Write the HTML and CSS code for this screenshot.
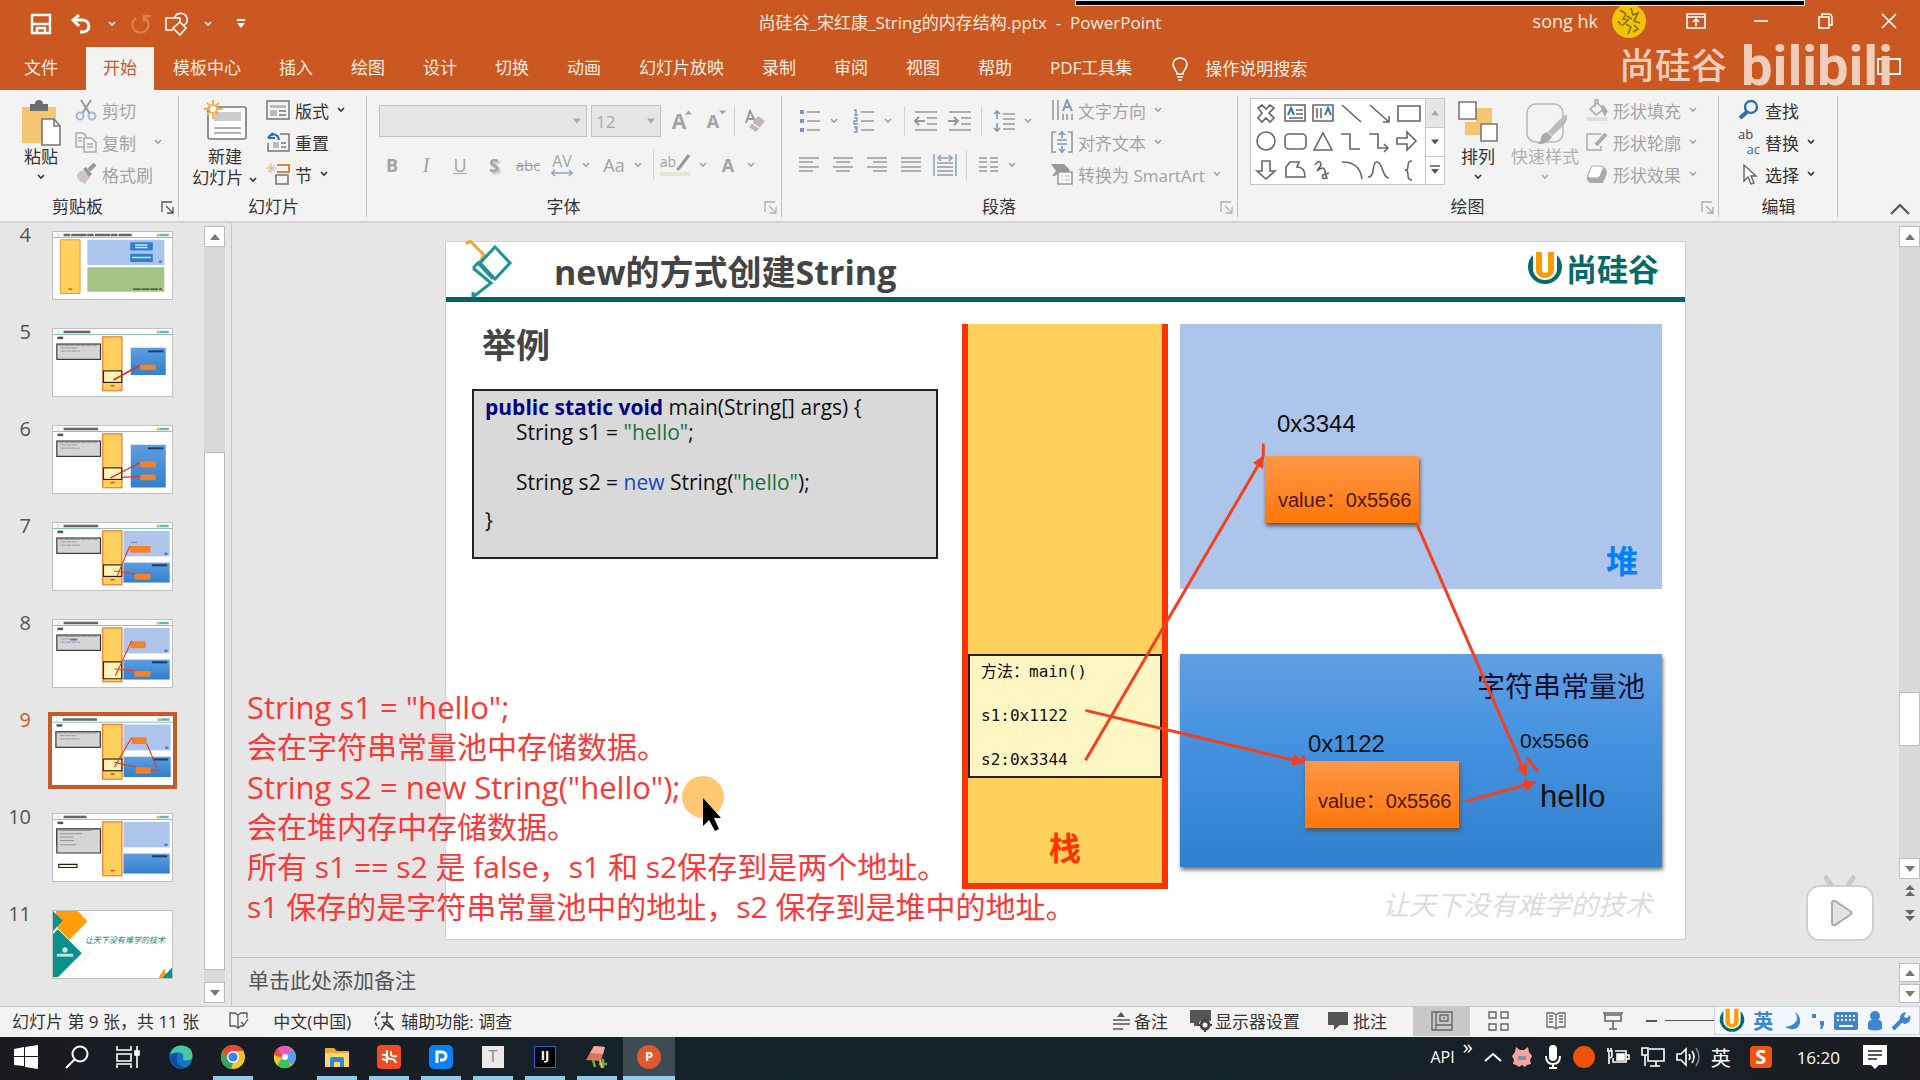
FILE: index.html
```html
<!DOCTYPE html>
<html lang="zh-CN">
<head>
    <meta charset="UTF-8">
    <meta name="viewport" content="width=device-width, initial-scale=1.0">
    <title>尚硅谷_宋红康_String的内存结构.pptx - PowerPoint</title>
    <link rel="stylesheet" href="styles.css">
</head>
<body>
    <!-- shared shapes -->
    <svg class="defs" width="0" height="0" aria-hidden="true">
        <defs>
            <symbol id="chev" viewBox="0 0 10 8"><path d="M2 2l3 3 3-3" fill="none" stroke="currentColor" stroke-width="1.600"/></symbol>
            <symbol id="tri-down" viewBox="0 0 10 10"><path d="M0 2h10l-5 6z" fill="currentColor"/></symbol>
            <symbol id="tri-up" viewBox="0 0 10 10"><path d="M0 8h10l-5-6z" fill="currentColor"/></symbol>
            <symbol id="launch" viewBox="0 0 14 14"><path d="M1 11V1h10M5 5l7 7M12 6v6H6" fill="none" stroke="currentColor" stroke-width="1.3"/></symbol>
            <symbol id="logo-u" viewBox="0 0 36 36">
                <path d="M6 4a17 17 0 1 0 24 0v14a12 11 0 0 1-24 0z" fill="#056a6a"/>
                <path d="M9 1h6v18a3 3 0 0 0 6 0V1h6v18a9 8 0 0 1-18 0z" fill="#fb9b05"/>
            </symbol>
            <linearGradient id="pool-fill" x1="0" y1="0" x2="0" y2="1">
                <stop offset="0" stop-color="#5f9de0"/><stop offset="1" stop-color="#3080cd"/>
            </linearGradient>
            <!-- parts of the small slides, in slide units -->
            <g id="t-head">
                <rect width="1240" height="697" fill="#fff"/>
                <rect y="54" width="1240" height="8" fill="#5fb3ae"/>
                <path d="M40 10l30 20-30 22" fill="none" stroke="#a5d5d2" stroke-width="8"/>
                <rect x="1080" y="18" width="34" height="28" fill="#f0b060"/>
                <rect x="1114" y="18" width="92" height="26" fill="#6cb4b8"/>
            </g>
            <g id="t-stack">
                <rect x="518" y="81" width="200" height="562" fill="#ffd15c" stroke="#f2732e" stroke-width="12"/>
                <path d="M600 590h40" stroke="#f04020" stroke-width="16"/>
            </g>
            <g id="t-code">
                <path d="M46 92h60" stroke="#555" stroke-width="26"/>
                <rect x="40" y="156" width="455" height="160" fill="#d5d5d5" stroke="#333" stroke-width="12"/>
                <path d="M60 170h400M80 196h180M80 230h200" stroke="#888" stroke-width="8" stroke-dasharray="50 8"/>
            </g>
            <g id="t-frame">
                <rect x="526" y="436" width="190" height="120" fill="#fff3b8" stroke="#222" stroke-width="12"/>
            </g>
            <g id="t-heap">
                <rect x="734" y="82" width="482" height="265" fill="#aec5eb"/>
                <path d="M1160 320h34" stroke="#3a72e0" stroke-width="22"/>
            </g>
            <g id="t-pool">
                <rect x="734" y="412" width="482" height="208" fill="url(#pool-fill)"/>
                <path d="M1030 440h160" stroke="#1b3f74" stroke-width="22"/>
            </g>
        </defs>
    </svg>

    <header class="titlebar">
        <div class="quick">
            <button aria-label="保存"><svg width="22" height="22" viewBox="0 0 22 22" fill="none" stroke="#fff" stroke-width="2.4"><path d="M2 2h18v18H2zM2 11h18M7 20v-5h8v5"/></svg></button>
            <button aria-label="撤消"><svg width="22" height="20" viewBox="0 0 22 20" fill="none" stroke="#fff" stroke-width="3"><path d="M9 1L3 6l6 6M3 6h9c9 0 9 12 1 12h-3"/></svg></button>
            <button class="narrow" aria-label="撤消列表"><svg width="10" height="8"><use href="#chev"/></svg></button>
            <button class="dim" aria-label="恢复"><svg width="22" height="20" viewBox="0 0 22 20" fill="none" stroke="#e07c4c" stroke-width="2.4"><path d="M6 4a8 8 0 1 0 9 0M14 8V2h7"/></svg></button>
            <button aria-label="形状"><svg width="26" height="24" viewBox="0 0 26 24" fill="none" stroke="#fff" stroke-width="1.6"><path d="M9 18H2V6h14v4M11 5c2-5 10-5 12 1 1 4-1 6-3 7M16 10l6 6-6 7-7-7z"/></svg></button>
            <button class="narrow" aria-label="形状列表"><svg width="10" height="8"><use href="#chev"/></svg></button>
            <button class="more" aria-label="自定义"><svg width="10" height="12" viewBox="0 0 10 12"><path d="M1 2h8" stroke="#fff" stroke-width="2"/><path d="M1 5h8l-4 5z" fill="#fff"/></svg></button>
        </div>
        <h1 class="doc-title">尚硅谷_宋红康_String的内存结构.pptx&nbsp; -&nbsp; PowerPoint</h1>
        <div class="account">
            <span>song hk</span>
            <svg class="avatar" width="34" height="34" viewBox="0 0 34 34"><circle cx="17" cy="17" r="17" fill="#f2c406"/><path d="M8 6l6 4-3 5 5 1-6 6M19 4l2 7 5-2-4 8 6 2M14 20l5 3-3 7M22 21l4 4-5 3M6 17l3 4M15 12l5 3" fill="none" stroke="#8f6a10" stroke-width="1.600"/></svg>
        </div>
        <div class="window-buttons">
            <button aria-label="功能区选项"><svg width="20" height="16" viewBox="0 0 20 16" fill="none" stroke="#fff" stroke-width="1.6"><path d="M1 1h18v14H1zM1 4h18M10 13V7M7 9l3-3 3 3"/></svg></button>
            <button aria-label="最小化"><svg width="16" height="16" viewBox="0 0 16 16" stroke="#fff" stroke-width="1.6"><path d="M1 8h14"/></svg></button>
            <button aria-label="还原"><svg width="16" height="16" viewBox="0 0 16 16" fill="none" stroke="#fff" stroke-width="1.6"><path d="M1 4h10v11H1zM4 4V1h6q4 0 4 4v7h-3"/></svg></button>
            <button aria-label="关闭"><svg width="16" height="16" viewBox="0 0 16 16" stroke="#fff" stroke-width="1.6"><path d="M1 1l14 14M15 1L1 15"/></svg></button>
        </div>
        <div class="share-bar"></div>
    </header>

    <nav class="tabs">
        <a href="#" class="file">文件</a>
        <a href="#" class="active">开始</a>
        <a href="#">模板中心</a>
        <a href="#">插入</a>
        <a href="#">绘图</a>
        <a href="#">设计</a>
        <a href="#">切换</a>
        <a href="#">动画</a>
        <a href="#">幻灯片放映</a>
        <a href="#">录制</a>
        <a href="#">审阅</a>
        <a href="#">视图</a>
        <a href="#">帮助</a>
        <a href="#">PDF工具集</a>
        <a href="#" class="tell"><svg width="18" height="24" viewBox="0 0 18 24" fill="none" stroke="#fff" stroke-width="1.6"><path d="M6 17c0-4-4-5-4-10a7 6 0 0 1 14 0c0 5-4 6-4 10zM6 20h6M7 23h4"/></svg>操作说明搜索</a>
        <button class="comment" aria-label="批注"><svg width="24" height="22" viewBox="0 0 24 22" fill="none" stroke="#fff" stroke-width="1.8"><path d="M1 1h22v15H11l-5 5v-5H1z"/></svg></button>
        <div class="stamp"><span class="stamp-name">尚硅谷</span><span class="stamp-site">bilibili</span></div>
    </nav>

    <section class="ribbon">
        <div class="group g-clip">
            <div class="group-body">
                <button class="big">
                    <svg width="42" height="46" viewBox="0 0 42 46"><path d="M2 7h34v36H2z" fill="#f6c571"/><path d="M10 4h5q0-4 4-4t4 4h5v7H10z" fill="#6d6d6d"/><path d="M22 19h12l6 7v19H22z" fill="#fff" stroke="#777" stroke-width="1.6"/><path d="M34 19v7h6" fill="none" stroke="#777" stroke-width="1.6"/></svg>
                    <span>粘贴</span><svg width="10" height="8"><use href="#chev"/></svg>
                </button>
                <div class="lines off">
                    <button><svg width="22" height="22" viewBox="0 0 22 22" fill="none" stroke="#999" stroke-width="2"><path d="M6 1l9 14M16 1L7 15"/><circle cx="5" cy="17" r="3.5" stroke="#a9b8d4"/><circle cx="17" cy="17" r="3.5" stroke="#a9b8d4"/></svg>剪切</button>
                    <button><svg width="22" height="22" viewBox="0 0 22 22" fill="none" stroke="#aaa" stroke-width="1.5"><path d="M10 16H1V2h7l3 3v2M9 7h7l5 4v10H9zM3 7h4M3 10h4M12 13h6M12 16h6"/></svg>复制<svg class="gap-chev" width="10" height="8"><use href="#chev"/></svg></button>
                    <button><svg width="22" height="22" viewBox="0 0 22 22"><path d="M2 11l5-4 8 7-5 7-4-2-4-4z" fill="#cfc5c5"/><path d="M8 6l3-2 6 7-3 3z" fill="#999"/><path d="M14 7l6-6" stroke="#999" stroke-width="4"/></svg>格式刷</button>
                </div>
            </div>
            <div class="group-label">剪贴板<button class="launcher dark" aria-label="剪贴板选项"><svg width="14" height="14"><use href="#launch"/></svg></button></div>
        </div>

        <div class="group g-slides">
            <div class="group-body">
                <button class="big">
                    <svg width="44" height="46" viewBox="0 0 44 46"><rect x="5" y="7" width="38" height="32" rx="2" fill="#fff" stroke="#777" stroke-width="1.6"/><path d="M11 12h27v9H11z" fill="#ccc"/><path d="M11 28h27M11 33h27" stroke="#999" stroke-width="1.4"/><circle cx="10" cy="9" r="4" fill="#fff" stroke="#f0b252" stroke-width="2"/><path d="M10 0v4M10 14v5M1 9h4M15 9h5M4 3l3 3M16 3l-3 3M4 15l3-3M16 15l-3-3" stroke="#f0b252" stroke-width="2"/></svg>
                    <span>新建</span><span>幻灯片 <svg width="10" height="8"><use href="#chev"/></svg></span>
                </button>
                <div class="lines">
                    <button><svg width="24" height="22" viewBox="0 0 24 22" fill="none" stroke="#777" stroke-width="1.5"><path d="M1 2h22v18H1z"/><path d="M4 6h16v3H4zM4 11h7v6H4z" fill="#bbb" stroke="none"/><path d="M13 12h7M13 16h7"/></svg>版式<svg width="10" height="8"><use href="#chev"/></svg></button>
                    <button><svg width="24" height="22" viewBox="0 0 24 22" fill="none" stroke="#777" stroke-width="1.5"><path d="M14 3h9v17H2v-8"/><path d="M7 11h6v6H7z" fill="#bbb" stroke="none"/><path d="M15 12h5M15 16h5"/><path d="M2 7l5-5M2 7h7M2 7c4-6 10-4 11 2" stroke="#2f6eb5" stroke-width="2.2"/></svg>重置</button>
                    <button><svg width="24" height="22" viewBox="0 0 24 22" fill="none"><path d="M11 2h12v7H11" stroke="#d8873a" stroke-width="2"/><path d="M10 12h12v9H10z" stroke="#777" stroke-width="1.6"/><path d="M5 0v10M0 5h10M2 2l7 7M9 2L2 9" stroke="#f0b252"/></svg>节<svg width="10" height="8"><use href="#chev"/></svg></button>
                </div>
            </div>
            <div class="group-label">幻灯片</div>
        </div>

        <div class="group g-font off">
            <div class="tools">
                <div class="tool-row first">
                    <label class="combo font-name"><select aria-label="字体" disabled><option></option></select><svg width="8" height="8"><use href="#tri-down"/></svg></label>
                    <label class="combo font-size"><select aria-label="字号" disabled><option>12</option></select><svg width="8" height="8"><use href="#tri-down"/></svg></label>
                    <button class="tool"><b class="letter-l">A</b><svg class="sup" width="7" height="7"><use href="#tri-up"/></svg></button>
                    <button class="tool"><b>A</b><svg class="sup" width="7" height="7"><use href="#tri-down"/></svg></button>
                    <i class="rule"></i>
                    <button class="tool" aria-label="清除格式"><svg width="22" height="24" viewBox="0 0 22 24"><path d="M1 14L5 2l5 10M2 10h6" fill="none" stroke="#999" stroke-width="2"/><path d="M13 7l7 5-9 11-7-5z" fill="#c5b5b6"/><path d="M7 14l7 5" stroke="#f3f3f3" stroke-width="1.5"/></svg></button>
                </div>
                <div class="tool-row">
                    <button class="tool"><b>B</b></button>
                    <button class="tool"><i class="serif">I</i></button>
                    <button class="tool"><u>U</u></button>
                    <button class="tool"><b class="shadow">S</b></button>
                    <button class="tool"><s>abc</s></button>
                    <button class="tool wide"><span class="spacing">AV<svg width="22" height="8" viewBox="0 0 22 8" fill="none" stroke="#8fa6c6" stroke-width="1.6"><path d="M1 4h20M4 1L1 4l3 3M18 1l3 3-3 3"/></svg></span><svg width="10" height="8"><use href="#chev"/></svg></button>
                    <button class="tool wide"><span>Aa</span><svg width="10" height="8"><use href="#chev"/></svg></button>
                    <i class="rule"></i>
                    <button class="tool wide"><span class="marker">ab<svg width="14" height="18" viewBox="0 0 14 18"><path d="M13 1L4 13l-3 3" stroke="#999" stroke-width="3"/></svg></span><svg width="10" height="8"><use href="#chev"/></svg></button>
                    <button class="tool wide color"><b>A</b><svg width="10" height="8"><use href="#chev"/></svg></button>
                </div>
            </div>
            <div class="group-label">字体<button class="launcher" aria-label="字体选项"><svg width="14" height="14"><use href="#launch"/></svg></button></div>
        </div>

        <div class="group g-para off">
            <div class="group-body">
                <div class="tools">
                    <div class="tool-row">
                        <button class="tool wide" aria-label="项目符号"><svg width="22" height="24" viewBox="0 0 22 24"><path d="M8 3h13M8 12h13M8 21h13" stroke="#999" stroke-width="1.6"/><path d="M1 3h4M1 12h4M1 21h4" stroke="#7d93bb" stroke-width="4"/></svg><svg width="10" height="8"><use href="#chev"/></svg></button>
                        <button class="tool wide" aria-label="编号"><svg width="22" height="24" viewBox="0 0 22 24"><path d="M8 3h13M8 12h13M8 21h13" stroke="#999" stroke-width="1.6"/><path d="M1 1h2v5M1 6h4M1 9h3v3H1v3h4M1 18h3v5H1M2 20h2" fill="none" stroke="#7d93bb" stroke-width="1.3"/></svg><svg width="10" height="8"><use href="#chev"/></svg></button>
                        <i class="rule"></i>
                        <button class="tool" aria-label="减少缩进"><svg width="24" height="20" viewBox="0 0 24 20" fill="none" stroke="#999" stroke-width="1.6"><path d="M1 1h22M13 7h10M13 13h10M1 19h22"/><path d="M1 10h10M5 6l-4 4 4 4" stroke-width="2"/></svg></button>
                        <button class="tool" aria-label="增加缩进"><svg width="24" height="20" viewBox="0 0 24 20" fill="none" stroke="#999" stroke-width="1.6"><path d="M1 1h22M13 7h10M13 13h10M1 19h22"/><path d="M0 10h10M6 6l4 4-4 4" stroke-width="2"/></svg></button>
                        <i class="rule"></i>
                        <button class="tool wide" aria-label="行距"><svg width="22" height="22" viewBox="0 0 22 22" fill="none" stroke="#999" stroke-width="1.6"><path d="M10 4h12M10 9h12M10 14h12M10 19h12"/><path d="M4 1v8M1 4l3-3 3 3M4 13v8M1 18l3 3 3-3" stroke="#7f98b8"/></svg><svg width="10" height="8"><use href="#chev"/></svg></button>
                    </div>
                    <div class="tool-row">
                        <button class="tool" aria-label="左对齐"><svg width="20" height="16" viewBox="0 0 20 16" stroke="#999" stroke-width="1.6"><path d="M0 1h20M0 5h14M0 10h20M0 14h14"/></svg></button>
                        <button class="tool" aria-label="居中"><svg width="20" height="16" viewBox="0 0 20 16" stroke="#999" stroke-width="1.6"><path d="M0 1h20M3 5h14M0 10h20M3 14h14"/></svg></button>
                        <button class="tool" aria-label="右对齐"><svg width="20" height="16" viewBox="0 0 20 16" stroke="#999" stroke-width="1.6"><path d="M0 1h20M6 5h14M0 10h20M6 14h14"/></svg></button>
                        <button class="tool" aria-label="两端对齐"><svg width="20" height="16" viewBox="0 0 20 16" stroke="#999" stroke-width="1.6"><path d="M0 1h20M0 5h20M0 10h20M0 14h20"/></svg></button>
                        <button class="tool" aria-label="分散对齐"><svg width="24" height="22" viewBox="0 0 24 22" fill="none" stroke="#999" stroke-width="1.6"><path d="M4 9h16M4 13h16M4 17h16M4 21h16"/><path d="M1 0v22M23 0v22M5 4h14M8 1L5 4l3 3M16 1l3 3-3 3" stroke="#8fa6bd"/></svg></button>
                        <i class="rule"></i>
                        <button class="tool wide" aria-label="分栏"><svg width="20" height="16" viewBox="0 0 20 16" stroke="#999" stroke-width="1.6"><path d="M0 1h8M0 5h8M0 10h8M0 14h8M11 1h8M11 5h8M11 10h8M11 14h8"/></svg><svg width="10" height="8"><use href="#chev"/></svg></button>
                    </div>
                </div>
                <div class="lines">
                    <button><svg width="22" height="22" viewBox="0 0 22 22" fill="none" stroke="#999" stroke-width="1.6"><path d="M2 1v20M7 1v20M12 15v6M16 15v6M21 15v6"/><path d="M12 12l4-11 5 11M13 8h6" stroke="#7f9cb8" stroke-width="2"/></svg>文字方向<svg width="10" height="8"><use href="#chev"/></svg></button>
                    <button><svg width="22" height="22" viewBox="0 0 22 22" fill="none" stroke="#999" stroke-width="1.6"><path d="M5 1H1v20h4M17 1h4v20h-4"/><path d="M6 9h10M6 13h10M11 0v7M8 4l3-3 3 3M11 15v7M8 18l3 3 3-3" stroke="#7f9cb8"/></svg>对齐文本<svg width="10" height="8"><use href="#chev"/></svg></button>
                    <button><svg width="22" height="22" viewBox="0 0 22 22"><path d="M0 1h13l6 6-2 2H8l-4 4H1l4-5z" fill="#999"/><path d="M7 9h14v12H7z" fill="#fff" stroke="#999" stroke-width="1.6"/><path d="M10 13h2M14 13h5M10 17h2M14 17h5" stroke="#c5a5a5"/></svg>转换为 SmartArt<svg width="10" height="8"><use href="#chev"/></svg></button>
                </div>
            </div>
            <div class="group-label">段落<button class="launcher" aria-label="段落选项"><svg width="14" height="14"><use href="#launch"/></svg></button></div>
        </div>

        <div class="group g-draw">
            <div class="group-body">
                <div class="gallery">
                    <svg width="168" height="84" viewBox="0 0 168 84" fill="none" stroke="#666" stroke-width="1.6">
                        <path d="M7 9l4-3 4 4 4-4 4 3-5 5 5 5-4 4-4-4-4 4-4-4 4-5z"/>
                        <path d="M34 6h20v16H34zM45 11h7M45 15h7M38 19h14M62 6h20v16H62zM66 9v10M70 9v10"/><path d="M37 16l3-7 3 7M74 16l3-7 3 7" stroke="#2f78ad" stroke-width="2"/>
                        <path d="M91 6l19 17M119 6l19 17M138 17v6h-6M147 7h22v15h-22z"/>
                        <circle cx="15" cy="42" r="9"/><rect x="34" y="35" width="21" height="15" rx="4"/><path d="M72 34l9 17H63zM90 35h9v15h10M118 35h9v14h10M133 45l4 4-4 4M146 39h10v-6l9 9-9 9v-6h-10z"/>
                        <path d="M11 62h8v10h5l-9 8-9-8h5zM35 68l4-5h9l-2 5q8 0 8 10H35zM64 66q5-7 6 0l-4 6q7-6 8 0t2 7q-6 2-4-3l6-2M91 63q18 0 20 17M117 78c8 0 3-15 9-15s5 16 12 16M161 62q-4 0-4 5t-3 4q3 0 3 5t4 5"/>
                    </svg>
                    <div class="gallery-nav">
                        <button class="spent" aria-label="上一行"><svg width="8" height="8"><use href="#tri-up"/></svg></button>
                        <button aria-label="下一行"><svg width="8" height="8"><use href="#tri-down"/></svg></button>
                        <button aria-label="全部形状"><svg width="10" height="12" viewBox="0 0 10 12"><path d="M0 2h10" stroke="#555" stroke-width="1.5"/><path d="M1 5h8l-4 5z" fill="#555"/></svg></button>
                    </div>
                </div>
                <button class="big arrange">
                    <svg width="40" height="46" viewBox="0 0 40 46"><path d="M18 8h16v16H18zM7 22h16v13H7z" fill="#f6c571"/><path d="M1 2h17v17H1zM23 24h16v17H23z" fill="#fff" stroke="#777" stroke-width="1.6"/></svg>
                    <span>排列</span><svg width="10" height="8"><use href="#chev"/></svg>
                </button>
                <button class="big quick-style off">
                    <svg width="44" height="46" viewBox="0 0 44 46" fill="none"><rect x="4" y="4" width="36" height="38" rx="9" fill="#f3f3f3" stroke="#bbb" stroke-width="1.6"/><path d="M44 14q1 6-3 11L29 36l-4-4 11-12z" fill="#bbb"/><path d="M24 32l5 5q-5 8-15 7 4-2 4-6t6-6z" fill="#aaa"/></svg>
                    <span>快速样式</span><svg width="10" height="8"><use href="#chev"/></svg>
                </button>
                <div class="lines off">
                    <button><svg width="22" height="22" viewBox="0 0 22 22" fill="none" stroke="#aaa" stroke-width="1.5"><path d="M4 10l7-6 7 6-8 6zM9 8V1h3v4"/><path d="M17 7l4 5-2 4-3-5z" fill="#aaa"/><path d="M1 20h20" stroke="#dfdfda" stroke-width="4"/></svg>形状填充<svg width="10" height="8"><use href="#chev"/></svg></button>
                    <button><svg width="22" height="22" viewBox="0 0 22 22" fill="none" stroke="#aaa" stroke-width="1.5"><path d="M15 3H1v16h14v-4"/><path d="M20 3L10 14" stroke-width="4"/></svg>形状轮廓<svg width="10" height="8"><use href="#chev"/></svg></button>
                    <button><svg width="22" height="22" viewBox="0 0 22 22"><path d="M6 3h10q5 2 5 7l-4 10H4q-4-3-3-6z" fill="#aaa"/><path d="M7 3h9q2 0 1 3l-3 7q-1 2-3 2H4q-3 0-2-3l3-7q0-2 2-2z" fill="#fff" stroke="#aaa"/></svg>形状效果<svg width="10" height="8"><use href="#chev"/></svg></button>
                </div>
            </div>
            <div class="group-label">绘图<button class="launcher" aria-label="绘图选项"><svg width="14" height="14"><use href="#launch"/></svg></button></div>
        </div>

        <div class="group g-edit">
            <div class="group-body">
                <div class="lines">
                    <button><svg width="22" height="22" viewBox="0 0 22 22" fill="none" stroke="#2f6eb5"><circle cx="13" cy="8" r="6" stroke-width="2.4"/><path d="M9 13l-7 6" stroke-width="4"/></svg>查找</button>
                    <button><span class="swap"><span>ab</span><span>ac</span></span>替换<svg class="gap-chev" width="10" height="8"><use href="#chev"/></svg></button>
                    <button><svg width="22" height="22" viewBox="0 0 22 22"><path d="M6 2v16l4-4 3 7 3-1-3-7h5z" fill="#fff" stroke="#666" stroke-width="1.4"/></svg>选择<svg width="10" height="8"><use href="#chev"/></svg></button>
                </div>
            </div>
            <div class="group-label">编辑</div>
        </div>
        <button class="collapse" aria-label="折叠功能区"><svg width="20" height="12" viewBox="0 0 20 12" fill="none" stroke="#555" stroke-width="2.2"><path d="M1 11l9-9 9 9"/></svg></button>
    </section>

    <main class="workspace">
        <aside class="pane">
            <ol class="thumbs">
                <li><span>4</span><svg class="thumb" viewBox="0 0 1240 697">
                    <use href="#t-head"/><path d="M110 30h710" stroke="#666" stroke-width="26" stroke-dasharray="70 10 160 6"/>
                    <path d="M76 80h206v560H76z" fill="#ffd15c" stroke="#f2932e" stroke-width="10"/><path d="M160 595h40" stroke="#f04020" stroke-width="14"/>
                    <path d="M358 80h802v262H358z" fill="#aec5eb"/><path d="M358 366h802v256H358z" fill="#a4c585"/>
                    <path d="M805 105h235v86H805zM805 226h235v86H805z" fill="#2f7fd0"/><path d="M855 135h130M855 162h130M825 265h195" stroke="#cfe3f7" stroke-width="16"/>
                    <path d="M1105 308h30" stroke="#3a72e0" stroke-width="20"/><path d="M835 594h300" stroke="#4d6b35" stroke-width="18" stroke-dasharray="80 10"/>
                </svg></li>
                <li><span>5</span><svg class="thumb" viewBox="0 0 1240 697">
                    <use href="#t-head"/><path d="M110 30h280" stroke="#666" stroke-width="26"/><use href="#t-code"/><use href="#t-stack"/><use href="#t-frame"/>
                    <path d="M810 195h365v285H810z" fill="url(#pool-fill)"/><path d="M990 232h160" stroke="#1b3f74" stroke-width="20"/><path d="M910 370h160v58H910z" fill="#f58228"/><path d="M630 530L900 380" stroke="#d93020" stroke-width="18"/>
                </svg></li>
                <li><span>6</span><svg class="thumb" viewBox="0 0 1240 697">
                    <use href="#t-head"/><path d="M110 30h360" stroke="#666" stroke-width="26"/><use href="#t-code"/><use href="#t-stack"/><use href="#t-frame"/>
                    <path d="M810 195h365v445H810z" fill="url(#pool-fill)"/><path d="M990 232h160" stroke="#1b3f74" stroke-width="20"/><path d="M910 370h160v60H910zM910 505h160v60H910z" fill="#f58228"/><path d="M600 540L900 385M720 535L900 525" stroke="#d93020" stroke-width="14"/>
                </svg></li>
                <li><span>7</span><svg class="thumb" viewBox="0 0 1240 697">
                    <use href="#t-head"/><path d="M110 30h360" stroke="#666" stroke-width="26"/><use href="#t-code"/><use href="#t-stack"/><use href="#t-frame"/><use href="#t-heap"/><use href="#t-pool"/>
                    <path d="M800 240h215v70H800zM850 530h165v60H850z" fill="#f58228"/><path d="M670 550L800 240M640 500L860 530" fill="none" stroke="#e83a24" stroke-width="12"/><path d="M810 200h70" stroke="#536a92" stroke-width="8"/>
                </svg></li>
                <li><span>8</span><svg class="thumb" viewBox="0 0 1240 697">
                    <use href="#t-head"/><path d="M110 30h360" stroke="#666" stroke-width="26"/><use href="#t-code"/><use href="#t-stack"/><path d="M526 436h190v176H526z" fill="#fff3b8" stroke="#222" stroke-width="12"/><use href="#t-heap"/><use href="#t-pool"/>
                    <path d="M810 220h155v75H810zM850 530h165v60H850z" fill="#f58228"/><path d="M650 580L820 215M640 510L860 530" fill="none" stroke="#e83a24" stroke-width="12"/><path d="M180 205h70" stroke="#5a6adf" stroke-width="16"/>
                </svg></li>
                <li class="selected"><span>9</span><svg class="thumb" viewBox="0 0 1240 697">
                    <use href="#t-head"/><path d="M110 30h350" stroke="#666" stroke-width="26"/><use href="#t-code"/><use href="#t-stack"/><use href="#t-frame"/><use href="#t-heap"/><use href="#t-pool"/>
                    <path d="M818 213h150v68H818zM858 519h152v66H858z" fill="#f58228"/><path d="M640 517L818 213M640 470L858 519M970 280l110 252M1020 560l70-18" fill="none" stroke="#e83a24" stroke-width="12"/>
                </svg></li>
                <li><span>10</span><svg class="thumb" viewBox="0 0 1240 697">
                    <use href="#t-head"/><path d="M110 30h240" stroke="#666" stroke-width="26"/><use href="#t-code"/><path d="M40 156h455v250H40z" fill="#d5d5d5" stroke="#333" stroke-width="12"/><path d="M60 170h350M70 205h230M70 240h140M70 275h150M70 320h170" stroke="#888" stroke-width="9"/><use href="#t-stack"/><use href="#t-heap"/><use href="#t-pool"/>
                    <path d="M60 525h190v32H60z" fill="#fff3b8" stroke="#222" stroke-width="12"/>
                </svg></li>
                <li><span>11</span><svg class="thumb" viewBox="0 0 1240 697">
                    <rect width="1240" height="697" fill="#fff"/><path d="M30 0h230l100 110-190 190L50 180z" fill="#ff9d0a"/><path d="M0 0l100 100L0 210z" fill="#0d8f8c"/><path d="M50 190l250 250L50 690H0V240z" fill="#0d8f8c"/><path d="M320 0l90 100M200 310l180 130-240 257" fill="none" stroke="#dfe9ef" stroke-width="8"/>
                    <circle cx="125" cy="405" r="28" fill="#bfe3e0"/><path d="M40 460h170" stroke="#bfe3e0" stroke-width="30"/>
                    <text x="330" y="330" class="thumb-motto">让天下没有难学的技术</text><path d="M1100 697l60-100 30 100z" fill="#ff9d0a"/><path d="M1140 697l100-110v110z" fill="#0d8f8c"/>
                </svg></li>
            </ol>
            <div class="scroll pane-scroll">
                <button aria-label="向上"><svg width="10" height="10"><use href="#tri-up"/></svg></button>
                <div class="track"><div class="thumb-bar"></div></div>
                <button aria-label="向下"><svg width="10" height="10"><use href="#tri-down"/></svg></button>
            </div>
        </aside>

        <section class="editor">
            <div class="stage-row">
                <div class="stage">
                    <article class="slide">
                        <header class="slide-head">
                            <svg width="50" height="58" viewBox="0 0 50 58" fill="none" stroke-width="3"><path d="M2 4l4-3 14 14-5 8" stroke="#eea63a"/><path d="M31 7l15 16-15 16-15-16z" stroke="#1d9592"/><path d="M9 28l18 15L9 57M9 28l5-5 15 16M9 52v5" stroke="#1d9592"/></svg>
                            <h2>new的方式创建String</h2>
                            <div class="brand"><svg width="36" height="36"><use href="#logo-u"/></svg><span>尚硅谷</span></div>
                        </header>
                        <div class="slide-body">
                            <div class="example">
                                <h3>举例</h3>
                                <div class="code">
                                    <p><b>public static void</b> main(String[] args) {</p>
                                    <p class="in">String s1 = <span class="str">"hello"</span>;</p>
                                    <p>&nbsp;</p>
                                    <p class="in">String s2 = <span class="new">new</span> String(<span class="str">"hello"</span>);</p>
                                    <p class="end">}</p>
                                </div>
                            </div>
                            <div class="stack">
                                <div class="frame"><p>方法：main()</p><p>s1:0x1122</p><p>s2:0x3344</p></div>
                                <strong>栈</strong>
                            </div>
                            <div class="memory">
                                <div class="heap">
                                    <span class="addr at-3344">0x3344</span>
                                    <div class="object obj-heap">value：0x5566</div>
                                    <strong>堆</strong>
                                </div>
                                <div class="pool">
                                    <span class="pool-name">字符串常量池</span>
                                    <span class="addr at-1122">0x1122</span>
                                    <span class="addr small at-5566">0x5566</span>
                                    <div class="object obj-pool">value：0x5566</div>
                                    <span class="literal">hello</span>
                                </div>
                                <p class="motto">让天下没有难学的技术</p>
                            </div>
                        </div>
                        <svg class="arrows" viewBox="0 0 1240 696" fill="none" stroke="#f4401f" stroke-width="3">
                            <defs><marker id="tip" viewBox="0 0 10 10" refX="9" refY="5" markerWidth="4" markerHeight="4" orient="auto"><path d="M0 0l10 5-10 5z" fill="#f4401f" stroke="none"/></marker></defs>
                            <path d="M640 518L818 214" marker-end="url(#tip)"/><path d="M818 201v13"/>
                            <path d="M640 468L858 520" marker-end="url(#tip)"/><path d="M858 513v8"/>
                            <path d="M971 280L1081 533" marker-end="url(#tip)"/><path d="M1081 515l12 14"/>
                            <path d="M1021 559L1090 540" marker-end="url(#tip)"/>
                        </svg>
                    </article>
                </div>
                <div class="scroll main-scroll">
                    <button aria-label="向上"><svg width="10" height="10"><use href="#tri-up"/></svg></button>
                    <div class="track"><div class="thumb-bar"></div></div>
                    <button aria-label="向下"><svg width="10" height="10"><use href="#tri-down"/></svg></button>
                    <button class="page" aria-label="上一张"><svg width="10" height="12" viewBox="0 0 10 12"><path d="M0 5l5-5 5 5zM0 11l5-5 5 5z" fill="#666"/></svg></button>
                    <button class="page" aria-label="下一张"><svg width="10" height="12" viewBox="0 0 10 12"><path d="M0 1h10L5 6zM0 7h10l-5 5z" fill="#666"/></svg></button>
                </div>
            </div>
            <div class="notes">
                <p>单击此处添加备注</p>
                <div class="scroll notes-scroll">
                    <button aria-label="向上"><svg width="10" height="10"><use href="#tri-up"/></svg></button>
                    <button aria-label="向下"><svg width="10" height="10"><use href="#tri-down"/></svg></button>
                </div>
            </div>

            <svg class="pointer" width="46" height="62" viewBox="0 0 46 62"><circle cx="22" cy="22" r="21" fill="#ffc873"/><path d="M22 23v28l6-6 6 11 4-2-5-11h7z" fill="#000"/></svg>
            <div class="remark">
                <p class="latin">String s1 = "hello";</p>
                <p>会在字符串常量池中存储数据。</p>
                <p class="latin">String s2 = new String("hello");</p>
                <p>会在堆内存中存储数据。</p>
                <p>所有 s1 == s2 是 false，s1 和 s2保存到是两个地址。</p>
                <p>s1 保存的是字符串常量池中的地址，s2 保存到是堆中的地址。</p>
            </div>
            <svg class="player" width="70" height="68" viewBox="0 0 70 68"><path d="M21 3l7 10M48 3l-7 10" stroke="#c9c9c9" stroke-width="5" stroke-linecap="round"/><rect x="2" y="11" width="66" height="54" rx="13" fill="#fff" stroke="#cfcfcf" stroke-width="2"/><path d="M27 28q0-3 3-2l15 10q3 2 0 4L30 50q-3 1-3-2z" fill="#e4e4e4" stroke="#aaa" stroke-width="2"/></svg>
        </section>
    </main>

    <footer class="status">
        <span class="page-count">幻灯片 第 9 张，共 11 张</span>
        <svg class="spell" width="20" height="20" viewBox="0 0 20 20" fill="none" stroke="#555" stroke-width="1.3"><path d="M9 17l-3-2H1V2h5l3 2zM9 4l3-2h6v5M9 17l3-2h3"/><path d="M12 11l3 3 4-6"/></svg>
        <span class="lang">中文(中国)</span>
        <span class="access"><svg width="24" height="22" viewBox="0 0 24 22" fill="none" stroke="#444" stroke-width="1.6"><path d="M7 2Q-2 9 6 19" stroke-dasharray="4 2"/><path d="M8 7h12M14 2v9M14 11l-6 9M14 11l7 9M10 12l11 8"/></svg>辅助功能: 调查</span>
        <div class="status-right">
            <button class="s-notes"><svg width="17" height="18" viewBox="0 0 17 18" stroke="#555" stroke-width="1.6"><path d="M0 8h17M0 12h17M0 17h10"/><path d="M8 0l4 5H4z" fill="#555" stroke="none"/></svg>备注</button>
            <button class="s-display"><svg width="23" height="22" viewBox="0 0 23 22"><path d="M0 0h21v11H10l-2 5H4v-3H0z" fill="#555"/><circle cx="15" cy="15" r="4" fill="#fff" stroke="#444" stroke-width="3"/><path d="M15 8v3M15 19v3M8 15h3M19 15h3" stroke="#444" stroke-width="2"/></svg>显示器设置</button>
            <button class="s-comment"><svg width="22" height="20" viewBox="0 0 22 20"><path d="M1 1h20v13H13l-6 5v-5H1z" fill="#555"/></svg>批注</button>
            <button class="view on" aria-label="普通视图"><svg width="22" height="20" viewBox="0 0 22 20" fill="none" stroke="#666" stroke-width="1.4"><path d="M1 1h20v18H1zM5 1v18M5 14h16M9 4h8v6H9zM12 7h2"/></svg></button>
            <button class="view" aria-label="浏览视图"><svg width="22" height="20" viewBox="0 0 22 20" fill="none" stroke="#666" stroke-width="1.4"><path d="M1 1h7v6H1zM13 1h7v6h-7zM1 13h7v6H1zM13 13h7v6h-7z"/></svg></button>
            <button class="view" aria-label="阅读视图"><svg width="20" height="20" viewBox="0 0 20 20" fill="none" stroke="#666" stroke-width="1.3"><path d="M10 18l-3-2H1V2h6l3 2 3-2h6v14h-6zM10 4v14M3 5h4M3 8h4M3 11h4M13 5h4M13 8h4M13 11h4"/></svg></button>
            <button class="view" aria-label="放映"><svg width="20" height="20" viewBox="0 0 20 20" fill="none" stroke="#666" stroke-width="1.6"><path d="M0 2h20M2 2v8h16V2M10 10v8M6 18h8M3 4h14"/></svg></button>
            <i class="zoom-out"></i><i class="zoom-line"></i>
            <div class="ime">
                <svg width="26" height="26"><use href="#logo-u"/></svg>
                <b>英</b>
                <svg width="20" height="20" viewBox="0 0 20 20"><path d="M13 1q7 12-10 15 12 6 15-4 1-7-5-11z" fill="#3f84cf"/></svg>
                <svg width="16" height="20" viewBox="0 0 16 20"><path d="M2 3h4v4H2zM10 10h4v4l-2 4h-2l1-4h-1z" fill="#3f84cf"/></svg>
                <svg width="24" height="18" viewBox="0 0 24 18"><rect width="24" height="18" rx="2" fill="#3f84cf"/><path d="M3 4h18M3 8h18" stroke="#fff" stroke-width="2" stroke-dasharray="2 2"/><path d="M5 14h14" stroke="#fff" stroke-width="2"/></svg>
                <svg width="16" height="20" viewBox="0 0 16 20"><circle cx="8" cy="5" r="5" fill="#3f84cf"/><path d="M1 13q0-4 4-4h6q4 0 4 4v5q-7 3-14 0z" fill="#3f84cf"/></svg>
                <svg width="20" height="20" viewBox="0 0 20 20"><path d="M2 18l9-9" stroke="#3f84cf" stroke-width="4"/><path d="M9 9q-1-7 6-8l-2 5 3 1 3-3q2 8-6 9z" fill="#3f84cf"/></svg>
            </div>
        </div>
    </footer>

    <nav class="taskbar">
        <div class="apps">
            <button class="sys" aria-label="开始"><svg width="24" height="24" viewBox="0 0 24 24" fill="#fff"><path d="M0 4l10-2v9H0zM11 2l13-2v11H11zM0 12h10v9L0 20zM11 12h13v12l-13-2z"/></svg></button>
            <button class="sys" aria-label="搜索"><svg width="24" height="24" viewBox="0 0 24 24" fill="none" stroke="#fff" stroke-width="2"><circle cx="15" cy="9" r="7.5"/><path d="M10 14l-9 9"/></svg></button>
            <button class="sys task-view" aria-label="任务视图"><svg width="24" height="22" viewBox="0 0 24 22" fill="none" stroke="#fff" stroke-width="1.6"><path d="M1 0v4h14V0M1 8h14v7H1zM1 22v-4h14v4M21 0v22"/><path d="M19 5h4v4h-4z" fill="#fff"/></svg></button>
            <button aria-label="Edge"><svg width="24" height="24" viewBox="0 0 24 24"><circle cx="12" cy="12" r="11.5" fill="#1673cc"/><path d="M1 9Q4 0 13 .500q10 1 10.500 10 0 5-6 5-5 0-3-4-1-5-7-4-4 0-6.500 1.500z" fill="#45c8a0"/><path d="M8 12q-2 8 8 10-12 4-15-9 3-6 8-5-1 2-1 4z" fill="#0d4f9d"/></svg></button>
            <button class="run" aria-label="Chrome"><svg width="24" height="24" viewBox="0 0 24 24"><circle cx="12" cy="12" r="12" fill="#f3c22c"/><path d="M1.600 6a12 12 0 0 1 20.800 0H12l-5 9z" fill="#e1493a"/><path d="M1.600 6L7 15l5 3-2 6A12 12 0 0 1 1.600 6z" fill="#39a657"/><circle cx="12" cy="12" r="6" fill="#fff"/><circle cx="12" cy="12" r="4.600" fill="#3f7fe8"/></svg></button>
            <button aria-label="浏览器"><svg width="24" height="24" viewBox="0 0 24 24"><circle cx="12" cy="12" r="11" fill="#f59b30"/><path d="M12 12Q4 8 5 3q8-5 14 1 0 6-7 8z" fill="#e85ac0"/><path d="M12 12Q18 4 20 5q5 7 0 14-6-1-8-7z" fill="#53a2ef"/><path d="M12 12q6 8 5 10-7 3-12-1-1-6 7-9z" fill="#35c65d"/><path d="M12 12Q2 12 1 9 3 4 5 3q2 6 7 9z" fill="#ee4a4c"/><path d="M1 10q4 4 11 2-8 4-7 9-5-4-4-11z" fill="#f6c22f"/><circle cx="12" cy="12" r="3" fill="#fff"/></svg></button>
            <button class="run" aria-label="资源管理器"><svg width="26" height="24" viewBox="0 0 26 24"><path d="M1 3h9l3 3h12v16H1z" fill="#eaa93a"/><path d="M1 8h24v14H1z" fill="#ffd770"/><path d="M6 22v-8q0-2 2-2h10q2 0 2 2v8h-4v-5h-6v5z" fill="#3089d8"/></svg></button>
            <button class="run" aria-label="XMind"><svg width="24" height="24" viewBox="0 0 24 24"><rect width="24" height="24" rx="4" fill="#f04b23"/><path d="M5 10q5-1 5 3v5M10 5v5q0 4 4 4t5 4M14 6v4q2 2 6 1M5 14l4 1" fill="none" stroke="#fff" stroke-width="2"/></svg></button>
            <button class="run" aria-label="P"><svg width="24" height="24" viewBox="0 0 24 24"><rect width="24" height="24" rx="5" fill="#0a82f5"/><path d="M8 18V7h5a4 4 0 0 1 0 8h-2" fill="none" stroke="#fff" stroke-width="3"/></svg></button>
            <button class="run" aria-label="Typora"><span class="tile tile-t">T</span></button>
            <button class="run" aria-label="IDEA"><span class="tile tile-ij">IJ</span></button>
            <button class="run" aria-label="绘图工具"><svg width="24" height="24" viewBox="0 0 24 24"><path d="M9 1l11 1-4 14-15-1z" fill="#d9745d"/><path d="M9 1l11 1-2 7-13-1z" fill="#f0a996"/><path d="M8 15l2 7M14 19h8M18 14v9" stroke="#6fb04a" stroke-width="2.500"/><path d="M15 15l2 8" stroke="#eebd3c" stroke-width="2"/></svg></button>
            <button class="run current" aria-label="PowerPoint"><span class="ppt">P</span></button>
        </div>
        <div class="tray">
            <span class="api">API</span><sup>»</sup>
            <svg class="t-up" width="18" height="10" viewBox="0 0 18 10" fill="none" stroke="#fff" stroke-width="2"><path d="M1 9l8-7 8 7"/></svg>
            <svg width="22" height="22" viewBox="0 0 22 22"><path d="M5 1l4 3h4l4-3 1 5 3 4-2 4 1 4-4 1-2 2-3-2-3 2-3-2-3-1 1-4-2-4 3-4z" fill="#f4a49c"/><path d="M7 10h8v4H7z" fill="#7d8fae"/></svg>
            <svg width="18" height="24" viewBox="0 0 18 24" fill="none" stroke="#fff" stroke-width="2"><rect x="6" y="1" width="6" height="14" rx="3" fill="#fff"/><path d="M2 11q0 8 7 8t7-8M9 19v4M5 23h8"/></svg>
            <svg width="22" height="22" viewBox="0 0 22 22"><circle cx="11" cy="11" r="11" fill="#ee5208"/></svg>
            <svg width="24" height="18" viewBox="0 0 24 18" fill="none" stroke="#fff" stroke-width="1.6"><path d="M9 3h11v11H7v-4M20 7h3v4h-3M1 3h5v4q0 3-3 3V3M2 0v3M5 0v3M3 10v6"/><path d="M11 6h7v6h-7z" fill="#fff"/></svg>
            <svg width="24" height="22" viewBox="0 0 24 22" fill="none" stroke="#fff" stroke-width="1.6"><path d="M8 3h15v12H7v-5M15 15v5M9 20h10M1 2h6v7H1zM4 9v11"/></svg>
            <svg width="24" height="20" viewBox="0 0 24 20" fill="none" stroke="#fff" stroke-width="1.6"><path d="M1 7h4l5-5v16l-5-5H1zM13 7q2 3 0 6M16 4q4 6 0 12"/><path d="M20 1q6 9 0 18" stroke="#77848a"/></svg>
            <span class="lang-key">英</span>
            <span class="sogou">S</span>
            <time>16:20</time>
            <svg width="24" height="24" viewBox="0 0 24 24"><path d="M0 0h24v20h-8l-4 4-4-4H0z" fill="#fff"/><path d="M5 6h14M5 10h14M5 14h9" stroke="#222" stroke-width="1.6"/></svg>
        </div>
    </nav>
</body>
</html>
```
FILE: styles.css
```css
* {
    box-sizing: border-box;
}
body {
    margin: 0;
    height: 100vh;
    display: flex;
    flex-direction: column;
    overflow: hidden;
    font-family: "Open Sans", "Noto Sans CJK SC", sans-serif;
    font-size: 17px;
    color: #333;
    background: #e6e6e6;
}
h1, h2, h3, p, ol {
    margin: 0;
    padding: 0;
}
button {
    border: none;
    padding: 0;
    background: none;
    font: inherit;
    color: inherit;
    display: flex;
    align-items: center;
    justify-content: center;
}
svg {
    flex: none;
}
.defs {
    position: absolute;
}

/* title bar */
.titlebar {
    position: relative;
    height: 47px;
    flex: none;
    display: grid;
    grid-template-columns: 1fr auto 1fr;
    background: #ca5820;
    color: #fbe9df;
}
.quick {
    display: flex;
    align-items: center;
    padding-left: 24px;
}
.quick button {
    width: 34px;
    margin-right: 6px;
}
.quick .narrow {
    width: 16px;
    margin-right: 4px;
}
.quick .narrow + .dim {
    margin-right: 2px;
}
.quick .more {
    margin-left: 4px;
}
.doc-title {
    font-size: 17px;
    font-weight: normal;
    line-height: 46px;
}
.account {
    display: flex;
    align-items: center;
    justify-content: flex-end;
    gap: 14px;
    margin-right: 274px;
    height: 42px;
    font-size: 18px;
}
.window-buttons {
    position: absolute;
    right: 0;
    top: 0;
    display: flex;
    height: 42px;
}
.window-buttons button {
    width: 65px;
}
.window-buttons button:last-child {
    width: 62px;
}
.share-bar {
    position: absolute;
    top: 0;
    left: 56%;
    width: 38%;
    height: 6px;
    background: #000;
    border: 1px solid #e8efea;
}

/* ribbon tabs */
.tabs {
    position: relative;
    height: 43px;
    flex: none;
    display: flex;
    padding-left: 5px;
    background: #ca5820;
}
.tabs a {
    padding: 0 19px;
    line-height: 42px;
    color: #fdeee6;
    text-decoration: none;
    white-space: nowrap;
}
.tabs .file {
    margin-right: 9px;
}
.tabs .active {
    padding: 0 17px;
    background: #f3f3f3;
    color: #c8572a;
}
.tabs .tell {
    display: flex;
    align-items: center;
    gap: 16px;
    padding-left: 20px;
}
.comment {
    margin-left: auto;
    margin-right: 19px;
}
.stamp {
    position: absolute;
    right: 27px;
    bottom: -6px;
    display: flex;
    align-items: center;
    gap: 14px;
    height: 60px;
    color: #f3cdbc;
    z-index: 1;
}
.stamp-name {
    font-size: 36px;
    line-height: 50px;
    font-weight: 500;
}
.stamp-site {
    font-family: Roboto, sans-serif;
    font-weight: bold;
    font-size: 56px;
    line-height: 60px;
}

/* ribbon */
.ribbon {
    position: relative;
    height: 133px;
    flex: none;
    display: flex;
    background: #f3f3f3;
    border-bottom: 2px solid #d4d4d4;
}
.group {
    position: relative;
    flex: none;
    display: flex;
    flex-direction: column;
    padding-top: 4px;
    color: #333;
}
.group::after {
    content: "";
    position: absolute;
    right: 0;
    top: 6px;
    bottom: 4px;
    width: 1px;
    background: #c2c2c2;
}
.group-body {
    display: flex;
    height: 99px;
}
.group-label {
    position: relative;
    line-height: 28px;
    text-align: center;
    color: #333;
}
.launcher {
    position: absolute;
    right: 4px;
    top: 8px;
    color: #aaa;
}
.launcher.dark {
    color: #555;
}
.off button {
    color: #a3a3a3;
}
.off.big {
    color: #b0b0b0;
}
.off .launcher.launcher {
    color: #b0b0b0;
}
.g-clip {
    width: 179px;
    padding-left: 12px;
}
.g-clip .group-label {
    padding-right: 36px;
}
.g-slides {
    width: 188px;
    padding-left: 9px;
}
.g-slides .group-label {
    padding-right: 8px;
}
.g-font {
    width: 415px;
}
.g-para {
    width: 456px;
}
.g-draw {
    width: 481px;
}
.g-font .group-label, .g-para .group-label, .g-draw .group-label {
    padding-right: 22px;
}
.g-draw .group-body {
    padding-left: 12px;
}
.g-edit {
    width: 119px;
}
.g-edit .group-body {
    padding-left: 14px;
}
.big {
    width: 58px;
    flex-direction: column;
    justify-content: flex-start;
    padding-top: 6px;
    line-height: 22px;
    white-space: nowrap;
}
.big span {
    height: 21px;
}
.big > svg:last-child {
    margin-top: 6px;
}
.g-slides .big {
    width: 74px;
}
.lines {
    display: grid;
    grid-template-rows: 32px 32px 32px;
    margin-left: 5px;
}
.lines button {
    justify-content: flex-start;
    gap: 5px;
    white-space: nowrap;
}
.lines button svg:last-child:not(:first-child) {
    margin-left: 2px;
}
.lines button .gap-chev.gap-chev {
    margin-left: 12px;
}
.g-clip .lines .gap-chev.gap-chev {
    margin-left: 12px;
}
.g-slides .lines {
    margin-left: 4px;
}
.g-para .lines {
    margin-left: 11px;
}
.tools {
    padding: 5px 0 0 8px;
    height: 99px;
}
.tool-row {
    display: flex;
    align-items: center;
    height: 44px;
}
.tool-row.first {
    padding-left: 4px;
}
.tool {
    position: relative;
    width: 34px;
    height: 32px;
    font-size: 18px;
}
.tool.wide {
    width: 52px;
    gap: 8px;
}
.tool.color {
    width: 58px;
    gap: 12px;
}
.g-para .tools {
    padding-left: 10px;
}
.g-para .tool.wide {
    width: 54px;
}
.rule {
    width: 1px;
    height: 30px;
    margin: 0 4px;
    background: #d4d4d4;
}
.combo {
    position: relative;
    margin-right: 4px;
}
.combo select {
    appearance: none;
    width: 100%;
    height: 32px;
    padding: 0 4px;
    border: 1px solid #c3c3c3;
    border-radius: 0;
    background: #e6e6e6;
    font: inherit;
    color: #aaa;
    opacity: 1;
}
.combo svg {
    position: absolute;
    right: 6px;
    top: 12px;
    color: #aaa;
}
.font-name {
    width: 208px;
}
.font-size {
    width: 70px;
    margin-right: 1px;
}
.letter-l {
    font-size: 21px;
}
.sup {
    position: absolute;
    right: 4px;
    top: 4px;
}
.serif {
    font-family: "Liberation Serif", serif;
    font-size: 20px;
}
.shadow {
    text-shadow: 2px 2px 2px #bbb;
}
.tool s {
    font-size: 15px;
}
.spacing {
    display: flex;
    flex-direction: column;
    align-items: center;
    font-size: 16px;
    line-height: 16px;
}
.marker {
    display: flex;
    font-size: 14px;
    line-height: 16px;
    border-bottom: 4px solid #e8e6cf;
}
.gallery {
    display: flex;
    height: 87px;
    width: 195px;
    margin-top: 4px;
    border: 1px solid #c8c8c8;
    background: #fff;
}
.gallery > svg {
    margin-right: 6px;
    overflow: visible;
}
.gallery-nav {
    flex: 1;
    display: grid;
    grid-template-rows: repeat(3, 1fr);
    border-left: 1px solid #c8c8c8;
    color: #555;
}
.gallery-nav button + button {
    border-top: 1px solid #c8c8c8;
}
.gallery-nav .spent {
    background: #e6e6e6;
    color: #aaa;
}
.arrange {
    width: 66px;
}
.quick-style {
    width: 68px;
}
.g-draw .lines {
    margin-left: 7px;
}
.swap {
    display: flex;
    flex-direction: column;
    align-items: flex-start;
    width: 22px;
    font-size: 13px;
    line-height: 15px;
    color: #444;
}
.swap span + span {
    align-self: flex-end;
    color: #2f6eb5;
}
.collapse {
    margin-left: auto;
    margin-right: 10px;
    align-self: flex-end;
    padding-bottom: 6px;
}

/* workspace */
.workspace {
    flex: 1;
    min-height: 0;
    display: flex;
}
.pane {
    width: 232px;
    flex: none;
    display: flex;
    justify-content: space-between;
    padding-right: 6px;
    border-right: 1px solid #c6c6c6;
    overflow: hidden;
}
.thumbs {
    list-style: none;
}
.thumbs li {
    display: flex;
    height: 97px;
}
.thumbs span {
    width: 31px;
    text-align: right;
    font-size: 20px;
    line-height: 24px;
    color: #555;
}
.thumb {
    width: 121px;
    height: 69px;
    margin: 8px 0 0 21px;
    border: 1px solid #c0c0c0;
}
.thumb-motto {
    font-family: "Liberation Serif", "Noto Sans CJK SC", serif;
    font-size: 84px;
    font-style: italic;
    fill: #1c7f80;
}
.selected .thumb {
    border: none;
    outline: 4px solid #c55a2b;
}
.thumbs .selected span {
    color: #d0582a;
}
.scroll {
    flex: none;
    display: flex;
    flex-direction: column;
    width: 21px;
    background: #d9d9d9;
    color: #777;
}
.scroll button {
    height: 21px;
    width: 100%;
    background: #fff;
    border: 1px solid #bdbdbd;
}
.pane-scroll {
    margin: 3px 0;
}
.track {
    flex: 1;
    display: flex;
    flex-direction: column;
}
.thumb-bar {
    background: #fff;
    border: 1px solid #bdbdbd;
}
.pane-scroll .track::before {
    content: "";
    flex: 206;
}
.pane-scroll .thumb-bar {
    flex: 517;
}
.pane-scroll .track::after {
    content: "";
    flex: 12;
}
.editor {
    position: relative;
    flex: 1;
    min-width: 0;
    display: flex;
    flex-direction: column;
}
.stage-row {
    flex: 1;
    min-height: 0;
    display: flex;
}
.stage {
    flex: 1;
    display: flex;
    align-items: center;
    justify-content: center;
}
.main-scroll {
    margin: 3px 0 30px;
}
.main-scroll .track::before {
    content: "";
    flex: 447;
}
.main-scroll .thumb-bar {
    flex: 52;
}
.main-scroll .track::after {
    content: "";
    flex: 113;
}
.main-scroll .page {
    height: 24px;
    border: none;
    background: #e6e6e6;
}

/* the slide */
.slide {
    position: relative;
    width: 1239px;
    height: 697px;
    flex: none;
    background: #fff;
    box-shadow: 0 0 0 1px #cfcfcf;
    color: #111;
}
.slide-head {
    display: flex;
    align-items: center;
    height: 60px;
    padding: 0 26px 0 18px;
    border-bottom: 5px solid #046166;
}
.slide-head h2 {
    margin: 6px 0 0 40px;
    font-size: 34px;
    line-height: 50px;
    color: #444;
}
.brand {
    margin-left: auto;
    display: flex;
    align-items: center;
    gap: 3px;
    font-size: 31px;
    line-height: 54px;
    font-weight: bold;
    color: #056a6a;
}
.slide-body {
    display: grid;
    grid-template-columns: 490px 206px 1fr;
    padding: 22px 23px 0 26px;
}
.example {
    width: 466px;
}
.example h3 {
    padding-left: 10px;
    font-size: 34px;
    line-height: 42px;
    color: #444;
}
.code {
    margin-top: 23px;
    height: 170px;
    padding: 4px 11px;
    border: 2px solid #222;
    background: #d9d9d9;
    font-size: 21px;
    line-height: 25px;
    white-space: nowrap;
}
.code b {
    color: #000080;
}
.code .in {
    padding-left: 31px;
}
.code .str {
    color: #17713a;
}
.code .new {
    color: #1648c4;
}
.code .end {
    padding-top: 13px;
}
.stack {
    display: flex;
    flex-direction: column;
    align-items: center;
    justify-content: flex-end;
    height: 565px;
    border: 6px solid #ff3300;
    border-top: none;
    background: #ffd15c;
}
.stack strong {
    font-size: 32px;
    line-height: 40px;
    margin: 50px 0 15px;
    color: #ff3300;
}
.frame {
    width: 100%;
    height: 124px;
    padding: 5px 11px;
    border: 2px solid #222;
    background: #fff6c4;
    font-family: "DejaVu Sans Mono", "Noto Sans CJK SC", monospace;
    font-size: 16px;
    line-height: 22px;
}
.frame p + p {
    padding-top: 22px;
}
.memory {
    padding-left: 12px;
}
.heap {
    position: relative;
    height: 265px;
    background: #aec5eb;
}
.heap strong {
    position: absolute;
    right: 24px;
    bottom: 6px;
    font-size: 32px;
    line-height: 44px;
    color: #0080ff;
}
.pool {
    position: relative;
    height: 213px;
    margin-top: 65px;
    background: linear-gradient(#619fe2, #4592e0 40%, #3080cd);
    box-shadow: 1px 3px 4px #777;
}
.addr, .object, .literal {
    font-family: "Liberation Sans", "Noto Sans CJK SC", sans-serif;
}
.addr {
    position: absolute;
    font-size: 24px;
    line-height: 28px;
}
.addr.small {
    font-size: 21px;
}
.at-3344 {
    left: 97px;
    top: 86px;
}
.at-1122 {
    left: 128px;
    top: 76px;
}
.at-5566 {
    left: 340px;
    top: 73px;
}
.object {
    position: absolute;
    width: 154px;
    height: 67px;
    padding: 31px 0 0 13px;
    background: linear-gradient(#ff9747, #ff770a);
    box-shadow: 1px 3px 4px #555;
    font-size: 20px;
    line-height: 26px;
    white-space: nowrap;
    color: #4a1808;
}
.obj-heap {
    left: 85px;
    top: 132px;
}
.obj-pool {
    left: 125px;
    top: 107px;
    padding-top: 27px;
}
.pool-name {
    position: absolute;
    right: 17px;
    top: 12px;
    font-size: 28px;
    line-height: 40px;
    color: #10102c;
}
.literal {
    position: absolute;
    left: 360px;
    top: 124px;
    font-size: 31px;
    line-height: 38px;
}
.motto {
    margin-top: 18px;
    padding-right: 10px;
    text-align: right;
    font-size: 27px;
    line-height: 40px;
    font-style: italic;
    color: #dcdcdc;
}
.arrows {
    position: absolute;
    left: 0;
    top: 0;
    width: 100%;
    height: 100%;
}
.notes {
    flex: none;
    height: 49px;
    display: flex;
    justify-content: space-between;
    border-top: 1px solid #c6c6c6;
    font-size: 21px;
    color: #555;
}
.notes p {
    padding-left: 16px;
    line-height: 44px;
}
.notes-scroll {
    justify-content: space-between;
    margin: 5px 0 3px;
}
.notes-scroll button {
    height: 19px;
}
.remark {
    position: absolute;
    left: 15px;
    bottom: 79px;
    font-size: 30px;
    line-height: 40px;
    white-space: nowrap;
    color: #fb3838;
}
.remark .latin {
    font-size: 31px;
}
.pointer {
    position: absolute;
    left: 449px;
    bottom: 169px;
}
.player {
    position: absolute;
    right: 45px;
    bottom: 63px;
}

/* status bar */
.status {
    flex: none;
    height: 31px;
    display: flex;
    align-items: center;
    padding: 0 0 3px 12px;
    border-top: 1px solid #c8c8c8;
    background: #f3f3f3;
    white-space: nowrap;
}
.spell {
    margin: 0 24px 0 30px;
}
.access {
    display: flex;
    align-items: center;
    gap: 4px;
    margin-left: 22px;
}
.status-right {
    margin-left: auto;
    display: flex;
    align-items: center;
    height: 27px;
}
.status-right button {
    gap: 4px;
}
.s-notes {
    margin-right: 22px;
}
.status-right .s-display {
    margin-right: 27px;
    gap: 2px;
}
.s-comment {
    margin-right: 26px;
}
.view {
    width: 57px;
    height: 30px;
}
.view.on {
    background: #c8c8c8;
}
.zoom-out {
    width: 11px;
    height: 2px;
    margin-left: 5px;
    background: #555;
}
.zoom-line {
    width: 49px;
    height: 1px;
    margin-left: 8px;
    background: #555;
}
.ime {
    display: flex;
    align-items: center;
    justify-content: space-between;
    width: 206px;
    height: 29px;
    padding: 0 8px 0 4px;
    border: 1px solid #c9d6e2;
    background: #f2f8fd;
    color: #3f84cf;
    font-size: 20px;
}

/* taskbar */
.taskbar {
    flex: none;
    height: 43px;
    display: flex;
    justify-content: space-between;
    background: linear-gradient(90deg, #1a1b21, #13242b 45%, #13242b 60%, #1b1d22);
    color: #fff;
}
.apps, .tray {
    display: flex;
}
.apps button {
    width: 52px;
    padding: 0 6px 3px;
}
.apps .sys {
    width: 51px;
}
.apps .task-view {
    margin-right: 2px;
}
.apps .run {
    background: linear-gradient(#8ecbea, #8ecbea) center bottom / 40px 4px no-repeat;
}
.apps .current {
    background: linear-gradient(#8ecbea, #8ecbea) center bottom / 100% 4px no-repeat #3f4b52;
}
.tile {
    width: 22px;
    height: 22px;
    line-height: 21px;
    font-size: 16px;
}
.tile-t {
    background: #e9e9ec;
    color: #888;
}
.tile-ij {
    background: #000;
    border: 1px solid #2a61d0;
    font-size: 13px;
    line-height: 16px;
    font-weight: bold;
}
.ppt {
    width: 24px;
    height: 24px;
    border-radius: 12px;
    background: #dc5a2d;
    font-size: 13px;
    line-height: 23px;
    font-weight: bold;
}
.tray {
    align-items: center;
    gap: 11px;
    padding: 0 33px 3px 0;
}
.tray sup {
    font-size: 20px;
    line-height: 20px;
    align-self: flex-start;
}
.api {
    margin-right: -3px;
    font-size: 16px;
}
.t-up {
    margin-right: -2px;
}
.lang-key {
    font-size: 20px;
}
.sogou {
    width: 22px;
    height: 22px;
    margin: 0 14px 0 8px;
    border-radius: 4px;
    background: #ee5510;
    text-align: center;
    font-size: 20px;
    line-height: 22px;
    font-weight: bold;
}
.tray time {
    margin-right: 12px;
}
```
